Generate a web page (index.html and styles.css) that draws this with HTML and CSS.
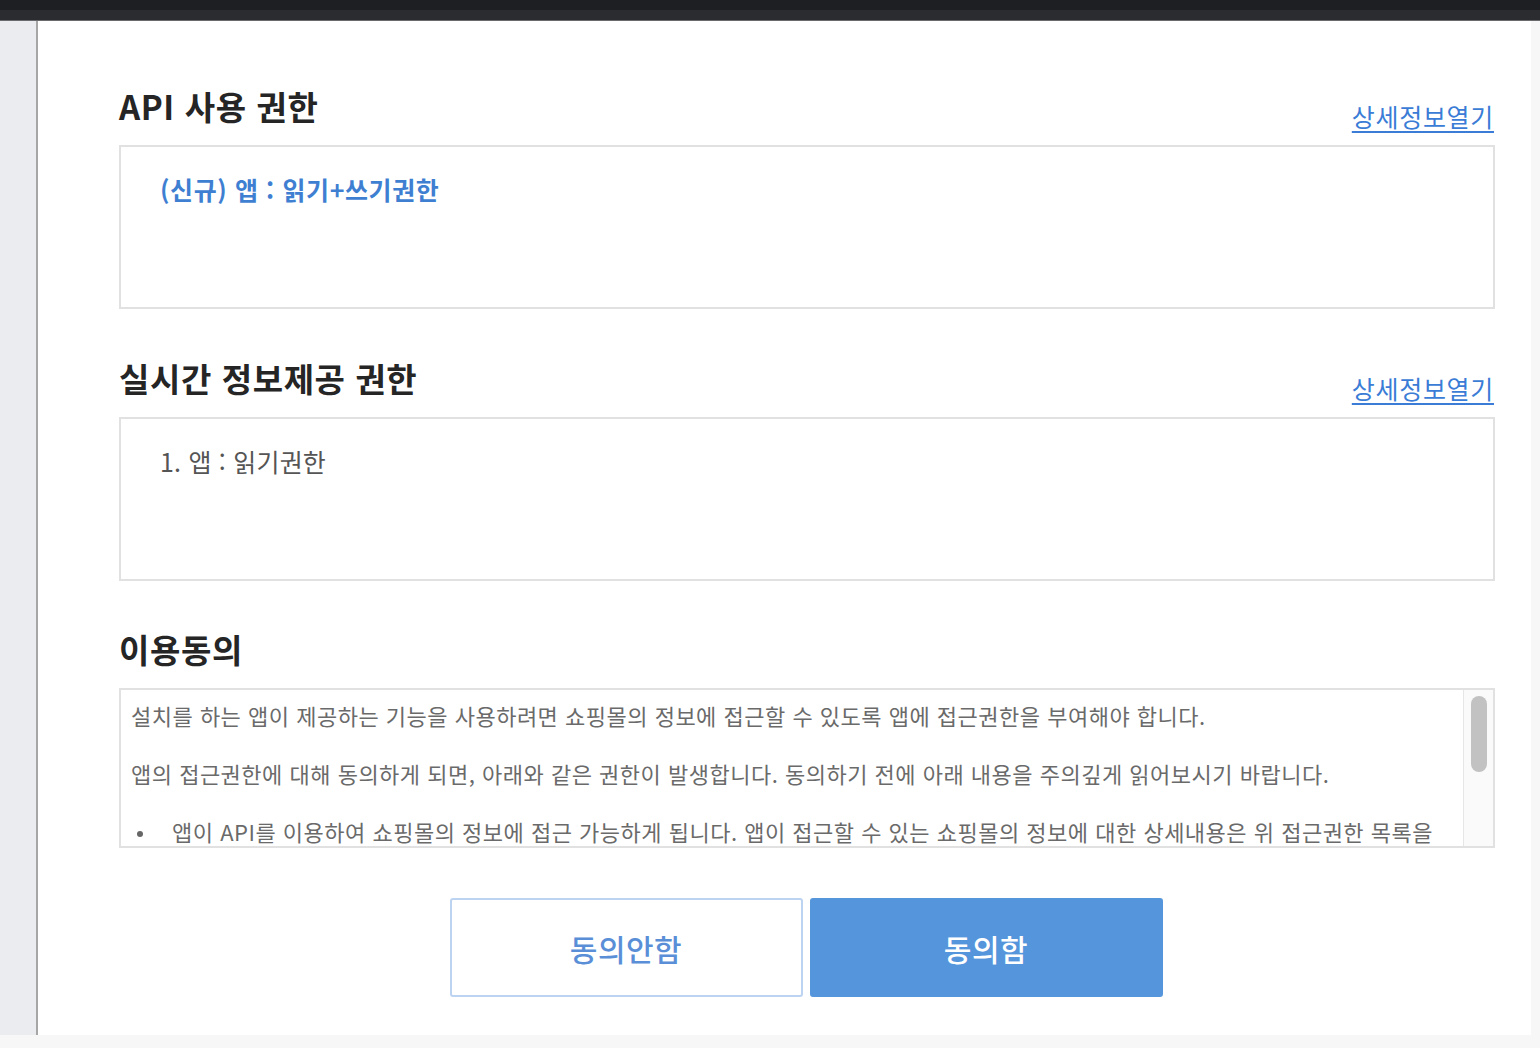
FILE: index.html
```html
<!DOCTYPE html>
<html lang="ko">
<head>
<meta charset="utf-8">
<title>앱 설치 동의</title>
<link rel="stylesheet" href="styles.css">
</head>
<body>
<div class="topbar"></div>
<div class="frame">
  <div class="side"></div>
  <main class="main">
    <section class="section">
      <div class="section-head">
        <h2 class="title">API 사용 권한</h2>
        <a class="more" href="#">상세정보열기</a>
      </div>
      <div class="box">
        <p class="perm perm-new">(신규) 앱 : 읽기+쓰기권한</p>
      </div>
    </section>
    <section class="section">
      <div class="section-head">
        <h2 class="title">실시간 정보제공 권한</h2>
        <a class="more" href="#">상세정보열기</a>
      </div>
      <div class="box">
        <p class="perm">1. 앱 : 읽기권한</p>
      </div>
    </section>
    <section class="section">
      <div class="section-head">
        <h2 class="title">이용동의</h2>
      </div>
      <div class="agree">
        <div class="agree-body">
          <p>설치를 하는 앱이 제공하는 기능을 사용하려면 쇼핑몰의 정보에 접근할 수 있도록 앱에 접근권한을 부여해야 합니다.</p>
          <p>앱의 접근권한에 대해 동의하게 되면, 아래와 같은 권한이 발생합니다. 동의하기 전에 아래 내용을 주의깊게 읽어보시기 바랍니다.</p>
          <ul>
            <li>앱이 API를 이용하여 쇼핑몰의 정보에 접근 가능하게 됩니다. 앱이 접근할 수 있는 쇼핑몰의 정보에 대한 상세내용은 위 접근권한 목록을 확인해주세요.</li>
          </ul>
        </div>
        <div class="scrollbar"><div class="thumb"></div></div>
      </div>
    </section>
    <div class="actions">
      <button class="btn btn-cancel" type="button">동의안함</button>
      <button class="btn btn-ok" type="button">동의함</button>
    </div>
  </main>
  <div class="rail"></div>
</div>
<div class="bottom"></div>
</body>
</html>
```

FILE: styles.css
```css
html, body {
  margin: 0;
  padding: 0;
  background: #ffffff;
}
body {
  font-family: "Noto Sans CJK KR", "Noto Sans", sans-serif;
  color: #222;
}
.topbar {
  height: 20px;
  background: linear-gradient(#1e1f23 0, #1e1f23 10px, #2b2c30 10px, #2b2c30 20px);
  border-bottom: 1px solid #6a6a6c;
}
.frame {
  display: flex;
  height: 1014px;
}
.side {
  width: 36px;
  background: #ebecf0;
  border-right: 2px solid #a6a6a6;
  flex: none;
}
.rail {
  width: 9px;
  background: #f7f7f7;
  flex: none;
}
.main {
  flex: 1;
  padding: 65px 36px 0 81px;
  background: #fff;
}
.section + .section {
  margin-top: 49px;
}
.section:last-of-type {
  margin-top: 48px;
}
.section-head {
  display: flex;
  justify-content: space-between;
  align-items: flex-start;
  margin-bottom: 19px;
  height: 40px;
}
.title {
  margin: 0;
  font-size: 33px;
  line-height: 40px;
  font-weight: 700;
  color: #252525;
  letter-spacing: 0.6px;
}
.more {
  margin-top: 15px;
  font-size: 25px;
  line-height: 30px;
  color: #3a7cd6;
  text-decoration: underline;
  text-underline-offset: 4px;
  text-decoration-thickness: 2px;
  letter-spacing: 0.7px;
  margin-right: 1px;
}
.box {
  box-sizing: border-box;
  height: 164px;
  border: 2px solid #e1e1e1;
  padding: 25px 39px;
}
.perm {
  margin: 0;
  font-size: 25px;
  line-height: 34px;
  color: #555;
  letter-spacing: 0.2px;
}
.perm-new {
  color: #3f7fd2;
  font-weight: 700;
  letter-spacing: 0.6px;
}
.agree {
  box-sizing: border-box;
  height: 160px;
  border: 2px solid #e1e1e1;
  display: flex;
  overflow: hidden;
}
.agree-body {
  flex: 1;
  min-width: 0;
  padding: 10px 10px 0 10px;
  overflow: hidden;
  font-size: 22px;
  line-height: 30px;
  color: #6a6a6a;
  letter-spacing: 0.5px;
}
.agree-body p {
  margin: 0 0 28px;
}
.agree-body ul {
  list-style: none;
  margin: 0;
  padding: 0 0 0 41px;
}
.agree-body li {
  position: relative;
}
.agree-body li::before {
  content: "";
  position: absolute;
  left: -35px;
  top: 15px;
  width: 6px;
  height: 6px;
  border-radius: 50%;
  background: #666;
}
.scrollbar {
  width: 29px;
  flex: none;
  background: #fafafa;
  border-left: 1px solid #e6e6e6;
}
.thumb {
  height: 76px;
  margin: 6px 6px 0 7px;
  border-radius: 8px;
  background: #c2c2c2;
}
.actions {
  display: flex;
  justify-content: center;
  gap: 7px;
  margin-top: 50px;
  padding-right: 2px;
}
.btn {
  box-sizing: border-box;
  width: 353px;
  height: 99px;
  border-radius: 3px;
  font-family: "Noto Sans CJK KR", "Noto Sans", sans-serif;
  font-size: 30px;
  font-weight: 500;
  letter-spacing: 0.5px;
  cursor: pointer;
}
.btn-cancel {
  background: #fff;
  border: 2px solid #bcd3f2;
  color: #5a8fd8;
}
.btn-ok {
  background: #5595db;
  border: 2px solid #5595db;
  color: #fff;
}
.bottom {
  height: 13px;
  background: #f7f7f7;
}
```
